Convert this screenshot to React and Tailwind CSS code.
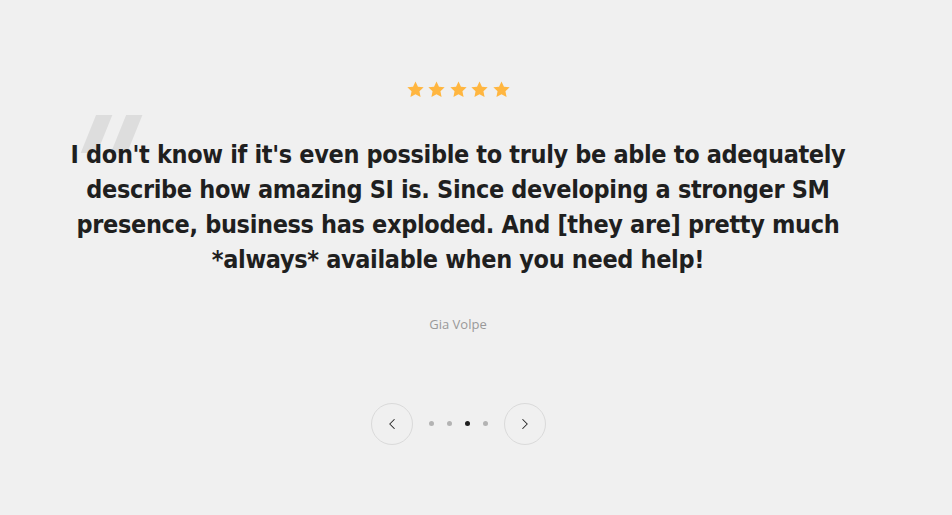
import { ChevronLeft, ChevronRight } from 'lucide-react';

const Star = () => (
  <svg viewBox="0 0 24 24" className="w-[19px] h-[19px]" fill="#ffb640">
    <path d="M12 1.8l3.1 6.6 7.2.9-5.3 5 1.4 7.1L12 17.9l-6.4 3.5 1.4-7.1-5.3-5 7.2-.9z" />
  </svg>
);

export default function App() {
  const dots = [false, false, true, false];

  return (
    <div className="w-[952px] h-[515px] bg-[#f0f0f0] overflow-hidden">
      <div className="w-[916px] flex flex-col items-center pt-[80px]">
        {/* Stars */}
        <div className="flex gap-[2.5px]">
          {[0, 1, 2, 3, 4].map(i => <Star key={i} />)}
        </div>

        {/* Quote */}
        <div className="relative mt-[38px]">
          <span
            className="absolute left-[-10px] top-[-38px] text-[140px] leading-none font-bold -skew-x-[22deg] text-[#dddddd] select-none"
            style={{ fontFamily: '"DejaVu Sans", sans-serif' }}
          >
            "
          </span>
          <p
            className="relative text-center text-[25px] leading-[35px] font-bold tracking-[-0.35px] text-[#1f1f1f]"
            style={{ fontFamily: '"DejaVu Sans Condensed", "DejaVu Sans", sans-serif' }}
          >
            I don't know if it's even possible to truly be able to adequately<br />
            describe how amazing SI is. Since developing a stronger SM<br />
            presence, business has exploded. And [they are] pretty much<br />
            *always* available when you need help!
          </p>
        </div>

        {/* Author */}
        <p className="mt-[38px] text-[13px] text-[#999999]" style={{ fontFamily: '"Open Sans", Lato, sans-serif' }}>
          Gia Volpe
        </p>

        {/* Nav */}
        <div className="mt-[68px] flex items-center">
          <button className="w-[42px] h-[42px] rounded-full border border-[#dadada] flex items-center justify-center text-[#222]">
            <ChevronLeft className="w-[18px] h-[18px]" strokeWidth={1.4} />
          </button>
          <div className="flex items-center gap-[13px] mx-[16px]">
            {dots.map((active, i) => (
              <span
                key={i}
                className={`w-[5px] h-[5px] rounded-full ${active ? 'bg-[#1f1f1f]' : 'bg-[#b3b3b3]'}`}
              />
            ))}
          </div>
          <button className="w-[42px] h-[42px] rounded-full border border-[#dadada] flex items-center justify-center text-[#222]">
            <ChevronRight className="w-[18px] h-[18px]" strokeWidth={1.4} />
          </button>
        </div>
      </div>
    </div>
  );
}
